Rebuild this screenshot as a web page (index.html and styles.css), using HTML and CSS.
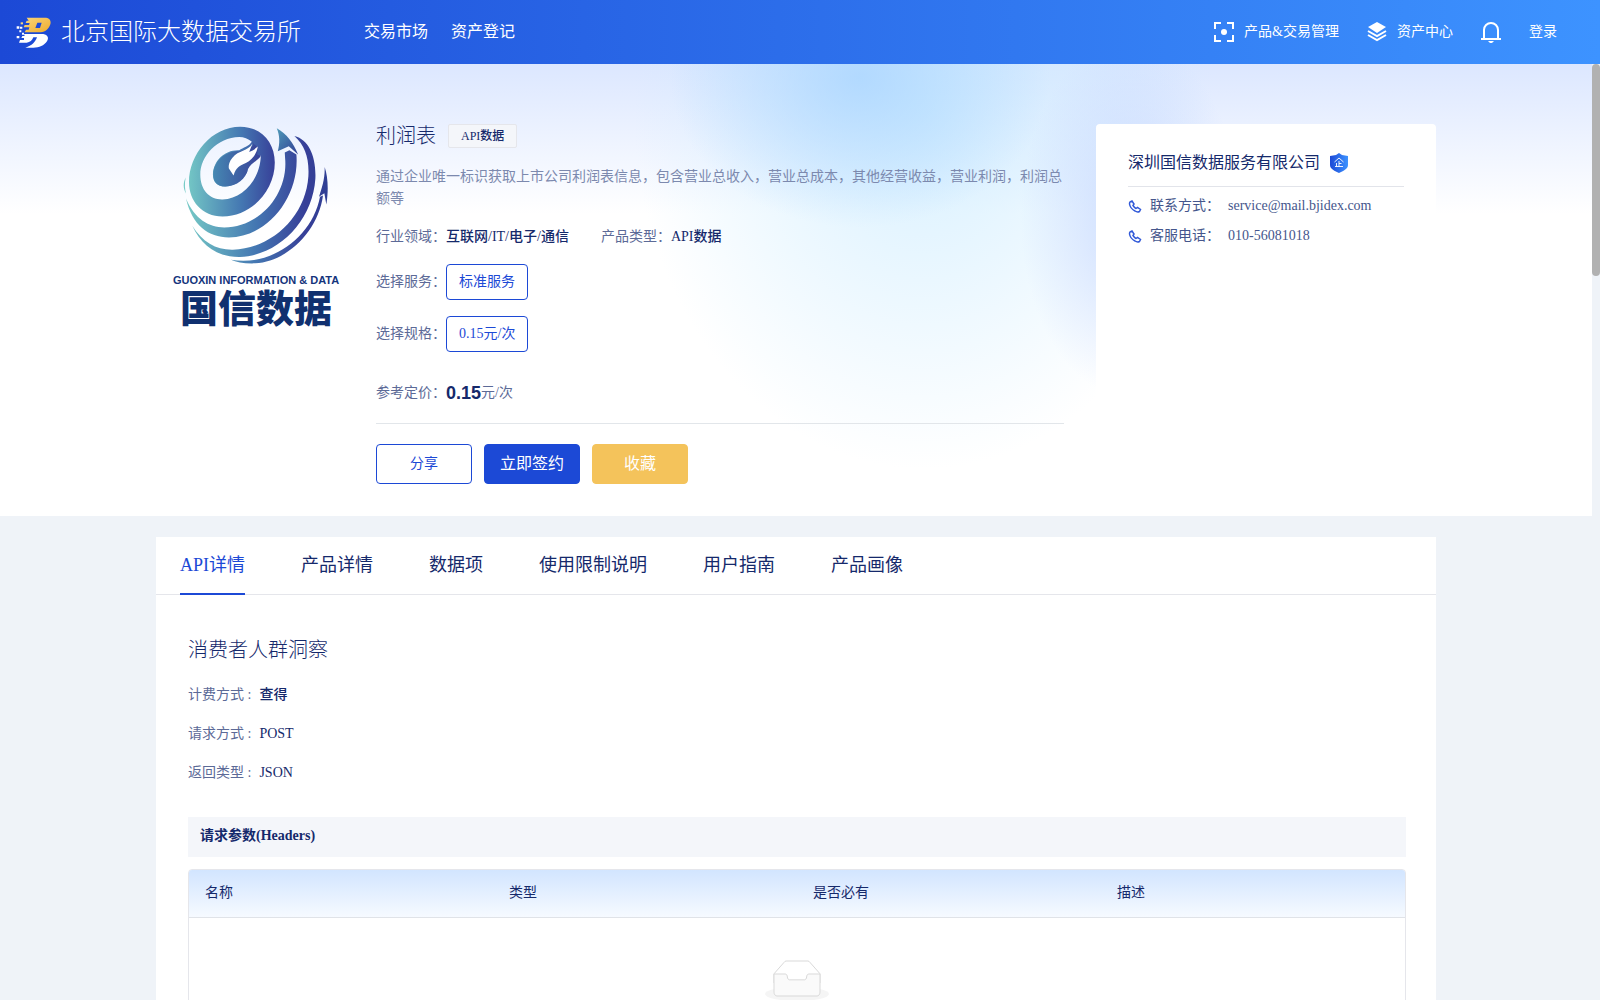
FILE: index.html
```html
<!DOCTYPE html>
<html lang="zh-CN">
<head>
    <meta charset="UTF-8">
    <meta name="viewport" content="width=device-width, initial-scale=1.0">
    <title>利润表 - 北京国际大数据交易所</title>
    <link rel="stylesheet" href="styles.css">
</head>
<body>
    <header class="header">
        <a class="logo" href="#">
            <svg class="logo-icon" viewBox="14 13 105 93" width="35" height="31">
                <defs>
                    <linearGradient id="gold" x1="0" y1="0" x2="1" y2="1">
                        <stop offset="0" stop-color="#f9d57c"/>
                        <stop offset="1" stop-color="#efac2c"/>
                    </linearGradient>
                </defs>
                <path fill="url(#gold)" fill-rule="evenodd" d="M46 15H100C115 15 120 24 117 35C113 48 103 58 88 59H40L44 51H52L54 44H37L40 37H53L55 31H43L46 24H52ZM78 30L72 46H86L91 30Z"/>
                <path fill="#fff" d="M38 64H96C110 67 113 76 107 86C98 99 84 105 66 105H42C62 99 72 88 77 74H66C63 83 56 89 46 90H23L26 82H38V76H30L33 70H40Z"/>
                <path fill="#fff" d="M16 41h8v7h-8zM24 53h6v6h-6zM16 70h8v7h-8zM32 60h6v6h-6zM26 42h7v6h-7z"/>
                <path fill="#f9d57c" d="M28 29h7v6h-7z"/>
            </svg>
            <span>北京国际大数据交易所</span>
        </a>
        <nav class="nav">
            <a href="#">交易市场</a>
            <a href="#">资产登记</a>
        </nav>
        <div class="user-nav">
            <a href="#">
                <svg viewBox="0 0 20 20" width="20" height="20" fill="none" stroke="#fff" stroke-width="2">
                    <path d="M1 7V1h6M13 1h6v6M19 13v6h-6M7 19H1v-6"/>
                    <circle cx="10" cy="10" r="3" fill="#fff" stroke="none"/>
                </svg>
                <span>产品&amp;交易管理</span>
            </a>
            <a href="#">
                <svg viewBox="0 0 20 20" width="20" height="20">
                    <path fill="#fff" d="M10 0l9 5-9 6-9-6z"/>
                    <path fill="none" stroke="#fff" stroke-width="2" d="M1 9l9 5 9-5M1 13l9 5 9-5"/>
                </svg>
                <span>资产中心</span>
            </a>
            <a href="#" aria-label="消息">
                <svg viewBox="0 0 20 22" width="20" height="22" fill="none" stroke="#fff" stroke-width="2">
                    <path d="M3 18V9a7 7 0 0 1 14 0v9M0 18h20"/>
                    <path fill="#fff" stroke="none" d="M7 20h6l-2 2H9z"/>
                </svg>
            </a>
            <a href="#">登录</a>
        </div>
    </header>

    <div class="page">
        <main class="main">
            <section class="hero">
                <div class="container hero-inner">
                    <div class="brand">
                        <svg viewBox="60 40 460 430" width="153" height="143">
                            <defs>
                                <linearGradient id="globe" gradientUnits="userSpaceOnUse" x1="75" y1="230" x2="500" y2="230">
                                    <stop offset="0" stop-color="#76cbc6"/>
                                    <stop offset=".4" stop-color="#4477b2"/>
                                    <stop offset=".64" stop-color="#373f98"/>
                                    <stop offset="1" stop-color="#303f94"/>
                                </linearGradient>
                                <linearGradient id="rings" gradientUnits="userSpaceOnUse" x1="75" y1="230" x2="500" y2="230">
                                    <stop offset="0" stop-color="#76cbc6"/>
                                    <stop offset=".5" stop-color="#4477b2"/>
                                    <stop offset=".85" stop-color="#373f98"/>
                                    <stop offset="1" stop-color="#303f94"/>
                                </linearGradient>
                                <linearGradient id="core" x1="0" y1="0" x2="1" y2="0">
                                    <stop offset="0" stop-color="#4688b2"/>
                                    <stop offset="1" stop-color="#373f98"/>
                                </linearGradient>
                                <linearGradient id="arrow" x1="0" y1="0" x2="1" y2="1">
                                    <stop offset="0" stop-color="#4f9ab8"/>
                                    <stop offset="1" stop-color="#303f94"/>
                                </linearGradient>
                            </defs>
                            <path fill="url(#globe)" fill-rule="evenodd" d="M241 48C304 48 345 95 345 156C345 240 276 318 188 318C126 318 87 271 87 215C87 130 156 48 241 48ZM238 79C172 80 121 137 121 192C121 239 149 268 188 267C247 266 301 209 303 135C284 151 266 157 262 184C247 211 220 228 196 228C172 228 158 213 159 190C161 151 194 117 238 119C250 110 267 107 276 93C265 84 252 79 238 79Z"/>
                            <path fill="url(#core)" d="M276 94L281 104C264 118 249 119 238 122C196 121 162 151 160 190C159 213 172 228 196 228C231 227 259 204 264 176C274 157 291 153 303 136L292 132L294 111Z"/>
                            <path fill="#fff" d="M278 99C263 124 237 118 217 142C205 156 206 170 207 174L221 195C228 169 239 166 258 157C276 149 291 130 294 108C285 116 277 121 268 124Z"/>
                            <path fill="url(#rings)" d="M375 126L389 119L410 132C420 256 326 380 207 381C145 381 97 345 78 264C104 326 147 351 193 351C305 350 386 245 376 143Z"/>
                            <path fill="url(#rings)" d="M404 76C448 87 470 139 467 205C459 329 360 435 240 440C174 441 123 405 97 346C128 396 169 419 219 418C340 413 438 316 446 197C449 143 436 105 404 76Z"/>
                            <path fill="url(#rings)" d="M77 201C73 221 75 237 78 249C69 234 69 216 77 201Z"/>
                            <path fill="url(#arrow)" d="M351 53C380 69 401 97 415 132L387 107L354 122C361 98 360 74 351 53Z"/>
                            <path fill="url(#rings)" d="M495 169C505 199 507 239 500 282L494 248L478 259C486 232 496 207 495 169ZM481 259L490 255C476 359 386 453 286 459C254 460 230 456 213 448C335 470 458 380 481 259Z"/>
                        </svg>
                        <div class="brand-en">GUOXIN INFORMATION &amp; DATA</div>
                        <div class="brand-cn">国信数据</div>
                    </div>

                    <div class="product">
                        <div class="product-title">
                            <h1>利润表</h1>
                            <span class="tag">API数据</span>
                        </div>
                        <p class="product-desc">通过企业唯一标识获取上市公司利润表信息，包含营业总收入，营业总成本，其他经营收益，营业利润，利润总额等</p>
                        <div class="product-meta">
                            <div><span class="label">行业领域：</span><span class="value">互联网/IT/电子/通信</span></div>
                            <div><span class="label">产品类型：</span><span class="value">API数据</span></div>
                        </div>
                        <div class="option-row">
                            <span class="label">选择服务：</span>
                            <button type="button" class="option">标准服务</button>
                        </div>
                        <div class="option-row">
                            <span class="label">选择规格：</span>
                            <button type="button" class="option">0.15元/次</button>
                        </div>
                        <div class="price">
                            <span class="label">参考定价：</span><span class="price-num">0.15</span><span class="label">元/次</span>
                        </div>
                        <div class="actions">
                            <button type="button" class="btn btn-share">分享</button>
                            <button type="button" class="btn btn-sign">立即签约</button>
                            <button type="button" class="btn btn-fav">收藏</button>
                        </div>
                    </div>

                    <aside class="company">
                        <div class="company-name">
                            <span>深圳国信数据服务有限公司</span>
                            <svg viewBox="0 0 18 20" width="18" height="20">
                                <defs>
                                    <linearGradient id="shield" x1="0" y1="0" x2="1" y2="0">
                                        <stop offset="0" stop-color="#1c49d6"/>
                                        <stop offset="1" stop-color="#3d93ff"/>
                                    </linearGradient>
                                </defs>
                                <path fill="url(#shield)" d="M9 0l3 2 6 1v9c0 4-5 6-9 8-4-2-9-4-9-8V3l6-1z"/>
                                <path fill="none" stroke="#fff" stroke-width=".9" d="M4.500 9L9 5l4.500 4M9 8v5.500M9 10.500h2.500M6.500 10v3.500M5 13.500h8"/>
                            </svg>
                        </div>
                        <div class="contact">
                            <svg viewBox="0 0 14 14" width="14" height="14"><path d="M2 3l2-1 2 3-1 1.500c1 1.500 2 2.500 3 3l1.500-1 3 2-1 2c-1 .5-3 .5-4.500-.5C4 10.500 2 8 1.500 5c0-1 0-1.500.5-2z"/></svg>
                            <span class="contact-label">联系方式：</span>
                            <span>service@mail.bjidex.com</span>
                        </div>
                        <div class="contact">
                            <svg viewBox="0 0 14 14" width="14" height="14"><path d="M2 3l2-1 2 3-1 1.500c1 1.500 2 2.500 3 3l1.500-1 3 2-1 2c-1 .5-3 .5-4.500-.5C4 10.500 2 8 1.500 5c0-1 0-1.500.5-2z"/></svg>
                            <span class="contact-label">客服电话：</span>
                            <span>010-56081018</span>
                        </div>
                    </aside>
                </div>
            </section>

            <section class="container detail">
                <nav class="tabs">
                    <a class="active" href="#">API详情</a>
                    <a href="#">产品详情</a>
                    <a href="#">数据项</a>
                    <a href="#">使用限制说明</a>
                    <a href="#">用户指南</a>
                    <a href="#">产品画像</a>
                </nav>
                <div class="detail-body">
                    <h2>消费者人群洞察</h2>
                    <dl class="info">
                        <div><dt>计费方式 :</dt><dd>查得</dd></div>
                        <div><dt>请求方式 :</dt><dd>POST</dd></div>
                        <div><dt>返回类型 :</dt><dd>JSON</dd></div>
                    </dl>
                    <h3>请求参数(Headers)</h3>
                    <div class="table-wrap">
                        <table>
                            <thead>
                                <tr>
                                    <th>名称</th>
                                    <th>类型</th>
                                    <th>是否必有</th>
                                    <th>描述</th>
                                </tr>
                            </thead>
                            <tbody>
                                <tr>
                                    <td colspan="4" class="empty">
                                        <svg width="64" height="41" viewBox="0 0 64 41">
                                            <g transform="translate(0 1)" fill="none" fill-rule="evenodd">
                                                <ellipse fill="#f5f5f5" cx="32" cy="33" rx="32" ry="7"/>
                                                <g fill-rule="nonzero" stroke="#d9d9d9">
                                                    <path d="M55 12.760L44.854 1.258C44.367.474 43.656 0 42.907 0H21.093c-.749 0-1.460.474-1.947 1.257L9 12.761V22h46v-9.240z"/>
                                                    <path fill="#fafafa" d="M41.613 15.931c0-1.605.994-2.930 2.227-2.931H55v18.137C55 33.260 53.680 35 52.050 35h-40.100C10.320 35 9 33.259 9 31.137V13h11.160c1.233 0 2.227 1.323 2.227 2.928v.022c0 1.605 1.005 2.901 2.237 2.901h14.752c1.232 0 2.237-1.308 2.237-2.913v-.007z"/>
                                                </g>
                                            </g>
                                        </svg>
                                    </td>
                                </tr>
                            </tbody>
                        </table>
                    </div>
                </div>
            </section>
        </main>
        <div class="scrollbar"><div class="scrollbar-thumb"></div></div>
    </div>
</body>
</html>
```
FILE: styles.css
```css
* {
    margin: 0;
    padding: 0;
    box-sizing: border-box;
}

body {
    height: 100vh;
    display: flex;
    flex-direction: column;
    overflow: hidden;
    background-color: #eff3f8;
    color: #15296b;
    font-family: "Liberation Serif", "Noto Sans CJK SC", serif;
    font-size: 14px;
    font-weight: 400;
    line-height: 22px;
}

a {
    color: inherit;
    text-decoration: none;
}

button {
    font: inherit;
    cursor: pointer;
}

svg {
    display: block;
    flex: none;
}

/* header */
.header {
    flex: none;
    display: flex;
    align-items: center;
    height: 64px;
    padding: 0 43px 0 16px;
    background: linear-gradient(90deg, #1c49d6, #3d93ff);
    color: #fff;
}

.logo {
    display: flex;
    align-items: center;
    gap: 10px;
    font-size: 24px;
    font-weight: 300;
    line-height: 32px;
}

.nav {
    display: flex;
    gap: 23px;
    margin-left: 63px;
    font-size: 16px;
}

.user-nav {
    display: flex;
    align-items: center;
    gap: 28px;
    margin-left: auto;
}

.user-nav a {
    display: flex;
    align-items: center;
    gap: 10px;
}

/* page */
.page {
    flex: 1;
    display: flex;
    min-height: 0;
}

.main {
    flex: 1;
    overflow: hidden;
}

.scrollbar {
    width: 8px;
}

.scrollbar-thumb {
    height: 212px;
    border-radius: 4px;
    background-color: #b1b1b1;
}

.container {
    max-width: 1280px;
    margin: 0 auto;
}

/* hero */
.hero {
    padding: 60px 0 32px;
    background:
        radial-gradient(ellipse 190px 150px at 54% 3%, rgba(160, 208, 255, 0.65), rgba(160, 208, 255, 0)),
        radial-gradient(ellipse 110px 180px at 71% 34%, rgba(188, 208, 255, 0.7), rgba(188, 208, 255, 0)),
        radial-gradient(ellipse 290px 360px at 58% 10%, rgba(205, 236, 255, 0.8), rgba(215, 240, 255, 0)),
        linear-gradient(180deg, #dce7ff 0, #fff 150px);
}

.hero-inner {
    display: flex;
    align-items: stretch;
}

.brand {
    display: flex;
    flex-direction: column;
    align-items: center;
    width: 200px;
    margin-right: 20px;
}

.brand-en {
    margin-top: 6px;
    color: #14347c;
    font-family: "Liberation Sans", sans-serif;
    font-size: 11px;
    font-weight: bold;
    line-height: 14px;
    white-space: nowrap;
}

.brand-cn {
    color: #10306f;
    font-family: "Noto Sans CJK SC", sans-serif;
    font-size: 38px;
    font-weight: 900;
    line-height: 38px;
}

.product {
    flex: 1;
}

.product-title {
    display: flex;
    align-items: center;
    gap: 12px;
    height: 24px;
}

.product-title h1 {
    font-size: 20px;
    font-weight: 300;
}

.tag {
    padding: 0 12px;
    border: 1px solid #e5e6eb;
    border-radius: 2px;
    background-color: #f4f6fa;
    font-size: 12px;
    font-weight: 500;
}

.product-desc {
    margin-top: 18px;
    color: #7c89ae;
}

.label {
    color: #5c6a97;
}

.value {
    font-weight: 500;
}

.product-meta {
    display: flex;
    gap: 32px;
    margin: 16px 0;
}

.option-row {
    display: flex;
    align-items: center;
    margin-bottom: 16px;
}

.option {
    height: 36px;
    padding: 0 12px;
    border: 1px solid #1c49d6;
    border-radius: 4px;
    background-color: #fff;
    color: #1c49d6;
}

.price {
    display: flex;
    align-items: center;
    height: 50px;
    margin-bottom: 5px;
}

.price-num {
    font-family: "Liberation Sans", sans-serif;
    font-size: 18px;
    font-weight: bold;
}

.actions {
    display: flex;
    gap: 12px;
    padding-top: 20px;
    border-top: 1px solid #e2e6ea;
}

.btn {
    width: 96px;
    height: 40px;
    border: 1px solid #1c49d6;
    border-radius: 4px;
    font-size: 16px;
}

.btn-share {
    background-color: #fff;
    color: #1c49d6;
    font-size: 14px;
}

.btn-sign {
    background-color: #1c49d6;
    color: #fff;
}

.btn-fav {
    border-color: #f4c35b;
    background-color: #f4c35b;
    color: #fff;
}

.company {
    width: 340px;
    margin-left: 32px;
    padding: 24px 32px;
    border-radius: 4px;
    background-color: #fff;
}

.company-name {
    display: flex;
    align-items: center;
    gap: 10px;
    height: 39px;
    margin-bottom: 8px;
    padding-bottom: 9px;
    border-bottom: 1px solid #e2e4ea;
    font-size: 16px;
}

.contact {
    display: flex;
    align-items: center;
    gap: 8px;
    margin-bottom: 8px;
    color: #45568c;
}

.contact svg {
    fill: none;
    stroke: #3159d8;
    stroke-width: 1.5;
}

.contact-label {
    width: 70px;
}

/* detail */
.detail {
    margin-top: 21px;
    background-color: #fff;
}

.tabs {
    display: flex;
    gap: 56px;
    height: 58px;
    padding: 0 24px;
    border-bottom: 1px solid #e5e6eb;
    font-size: 18px;
}

.tabs a {
    height: 58px;
    line-height: 56px;
}

.tabs .active {
    border-bottom: 2px solid #1c49d6;
    color: #1c49d6;
}

.detail-body {
    padding: 43px 30px 32px 32px;
}

.detail-body h2 {
    margin-bottom: 22px;
    font-size: 20px;
    font-weight: 300;
    line-height: 24px;
}

.info div {
    display: flex;
    gap: 8px;
    margin-bottom: 17px;
}

.info dt {
    color: #5c6a97;
}

.info dd {
    font-weight: 500;
}

.detail-body h3 {
    height: 40px;
    margin: 33px 0 12px;
    padding: 0 12px;
    background-color: #f4f6fa;
    font-size: 14px;
    font-weight: bold;
    line-height: 38px;
}

.table-wrap {
    border: 1px solid #e5e6eb;
    border-radius: 4px 4px 0 0;
    overflow: hidden;
}

table {
    width: 100%;
    border-collapse: collapse;
    table-layout: fixed;
}

thead {
    background: linear-gradient(180deg, #d2e5ff, #f6faff);
}

th {
    height: 47px;
    padding: 0 16px;
    border-bottom: 1px solid #e0e3e8;
    font-weight: 400;
    text-align: left;
}

.empty {
    height: 162px;
    padding: 42px 16px;
    vertical-align: top;
}

.empty svg {
    margin: 0 auto;
}
```
